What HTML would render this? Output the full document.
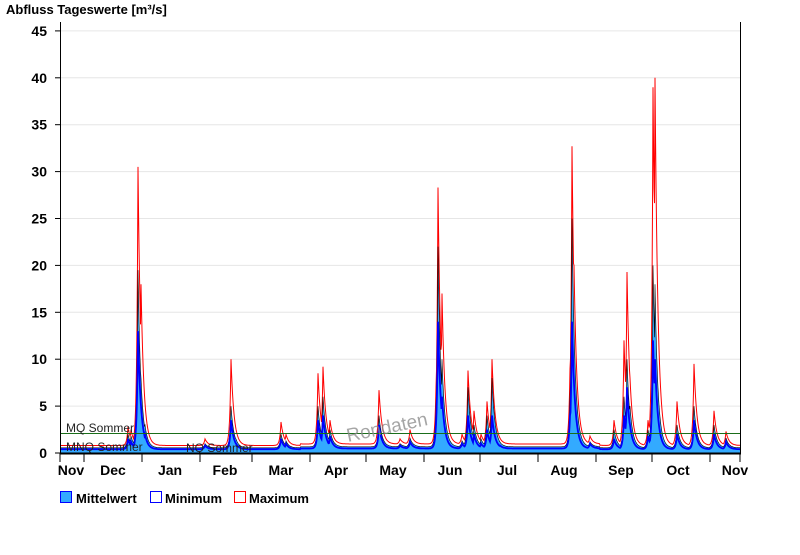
<!DOCTYPE html>
<html><head><meta charset="utf-8"><style>
body{margin:0;background:#fff;width:800px;height:550px;overflow:hidden;font-family:"Liberation Sans",Arial,sans-serif}
svg text{font-family:"Liberation Sans",Arial,sans-serif}
</style></head><body>
<svg id="c" width="800" height="550" xmlns="http://www.w3.org/2000/svg">
<text x="6" y="14" font-size="13" font-weight="bold">Abfluss Tageswerte [m³/s]</text>
<g id="grid" stroke="#e6e6e6" stroke-width="1"></g>
<g id="data"></g>
<line x1="60" y1="433.5" x2="740" y2="433.5" stroke="#1a6e1a" stroke-width="1"/>
<text x="66" y="432" font-size="12" fill="#222">MQ Sommer</text>
<text x="66" y="451" font-size="12" fill="#222">MNQ Sommer</text>
<text x="186" y="452" font-size="12" fill="#222">NQ Sommer</text>
<text x="348" y="442" font-size="19" fill="#888" opacity="0.75" transform="rotate(-12 348 442)">Rondaten</text>
<line x1="60.5" y1="22" x2="60.5" y2="454" stroke="#000"/>
<line x1="740.5" y1="22" x2="740.5" y2="454" stroke="#000"/>
<line x1="60" y1="453.5" x2="741" y2="453.5" stroke="#000" stroke-width="2"/>
<g id="ax" font-size="14" font-weight="bold"></g>
<rect x="60.5" y="491.5" width="11" height="11" fill="#33aaff" stroke="#0000ff"/>
<text x="76" y="503" font-size="13" font-weight="bold">Mittelwert</text>
<rect x="150.5" y="491.5" width="11" height="11" fill="#fff" stroke="#0000ff"/>
<text x="165" y="503" font-size="13" font-weight="bold">Minimum</text>
<rect x="234.5" y="491.5" width="11" height="11" fill="#fff" stroke="#ff0000"/>
<text x="249" y="503" font-size="13" font-weight="bold">Maximum</text>
</svg>
<script>
var NS="http://www.w3.org/2000/svg";
function el(p,t,a,tx){var e=document.createElementNS(NS,t);for(var k in a)e.setAttribute(k,a[k]);if(tx)e.textContent=tx;p.appendChild(e);return e;}
var g=document.getElementById('grid'),ax=document.getElementById('ax');
function Y(v){return 453-9.38*v;}
for(var v=0;v<=45;v+=5){var y=Y(v);if(v>0)el(g,'line',{x1:61,x2:740,y1:y,y2:y});
el(ax,'line',{x1:55,x2:60,y1:y,y2:y,stroke:'#000'});el(ax,'text',{x:47,y:y+5,'text-anchor':'end'},String(v));}
var ticks=[60,84,142,200,252,310,366,424,480,538,596,652,710,740];
ticks.forEach(function(x){el(ax,'line',{x1:x,x2:x,y1:453,y2:462,stroke:'#000'});});
var labs=[[71,'Nov'],[113,'Dec'],[170,'Jan'],[225,'Feb'],[281,'Mar'],[336,'Apr'],[393,'May'],[450,'Jun'],[507,'Jul'],[564,'Aug'],[621,'Sep'],[678,'Oct'],[735,'Nov']];
labs.forEach(function(l){el(ax,'text',{x:l[0],y:475,'text-anchor':'middle'},l[1]);});
var P=[[128,2.8,2,1.5],[131,2.5,1.8,1.2],[138,30.5,19.5,13],[141,18,8,5],[145,4,3,2],[205,1.5,1,0.8],[231,10,5,3.5],[236,2,1.5,1],[281,3.3,2,1.5],[286,2,1.3,1],[318,8.5,5,3.5],[323,9.2,6,4],[330,3.5,2.5,1.8],[379,6.7,4,3],[400,1.5,1,0.8],[410,2.5,1.6,1.2],[436,7,5,3],[438,28.3,22,14],[442,17,10,6],[447,3,2,1.5],[462,2,1.3,1],[468,8.8,7,4],[474,4.5,3,2],[481,2,1.5,1],[487,5.5,4,2.5],[492,10,8,4],[500,1.5,1,0.8],[570,9,6,4],[572,32.7,25,14],[574,20,10,6],[590,1.8,1.2,1],[614,3.5,2.5,1.5],[624,12,6,4],[627,19.3,10,7],[630,8,5,3],[648,3.5,2.5,1.8],[653,39,20,12],[655,40,18,10],[657,15,8,5],[677,5.5,3,2],[694,9.5,5,3.5],[714,4.5,3,2],[726,2.3,1.6,1.2]];
function val(x,i){var base=[0.8,0.55,0.4][i];if(x>300&&x<600)base*=1.2;var m=base;
P.forEach(function(p){var d=x-p[0];var a=p[i+1]-base;var f=d<0?Math.exp(d/1.2):Math.exp(-d/3);if(base+a*f>m)m=base+a*f;});return m;}
function path(i){var s='';for(var x=61;x<=740;x+=0.5){s+=(x==61?'M':'L')+x+','+Y(val(x,i)).toFixed(1);}return s;}
var d=document.getElementById('data');
el(d,'path',{d:path(1)+'L740,453L61,453Z',fill:'#33aaff'});
el(d,'path',{d:path(0),fill:'none',stroke:'#ff0000','stroke-width':1});
el(d,'path',{d:path(1),fill:'none',stroke:'#000','stroke-width':0.6});
el(d,'path',{d:path(2),fill:'none',stroke:'#0000ff','stroke-width':1.8});
</script>
</body></html>
